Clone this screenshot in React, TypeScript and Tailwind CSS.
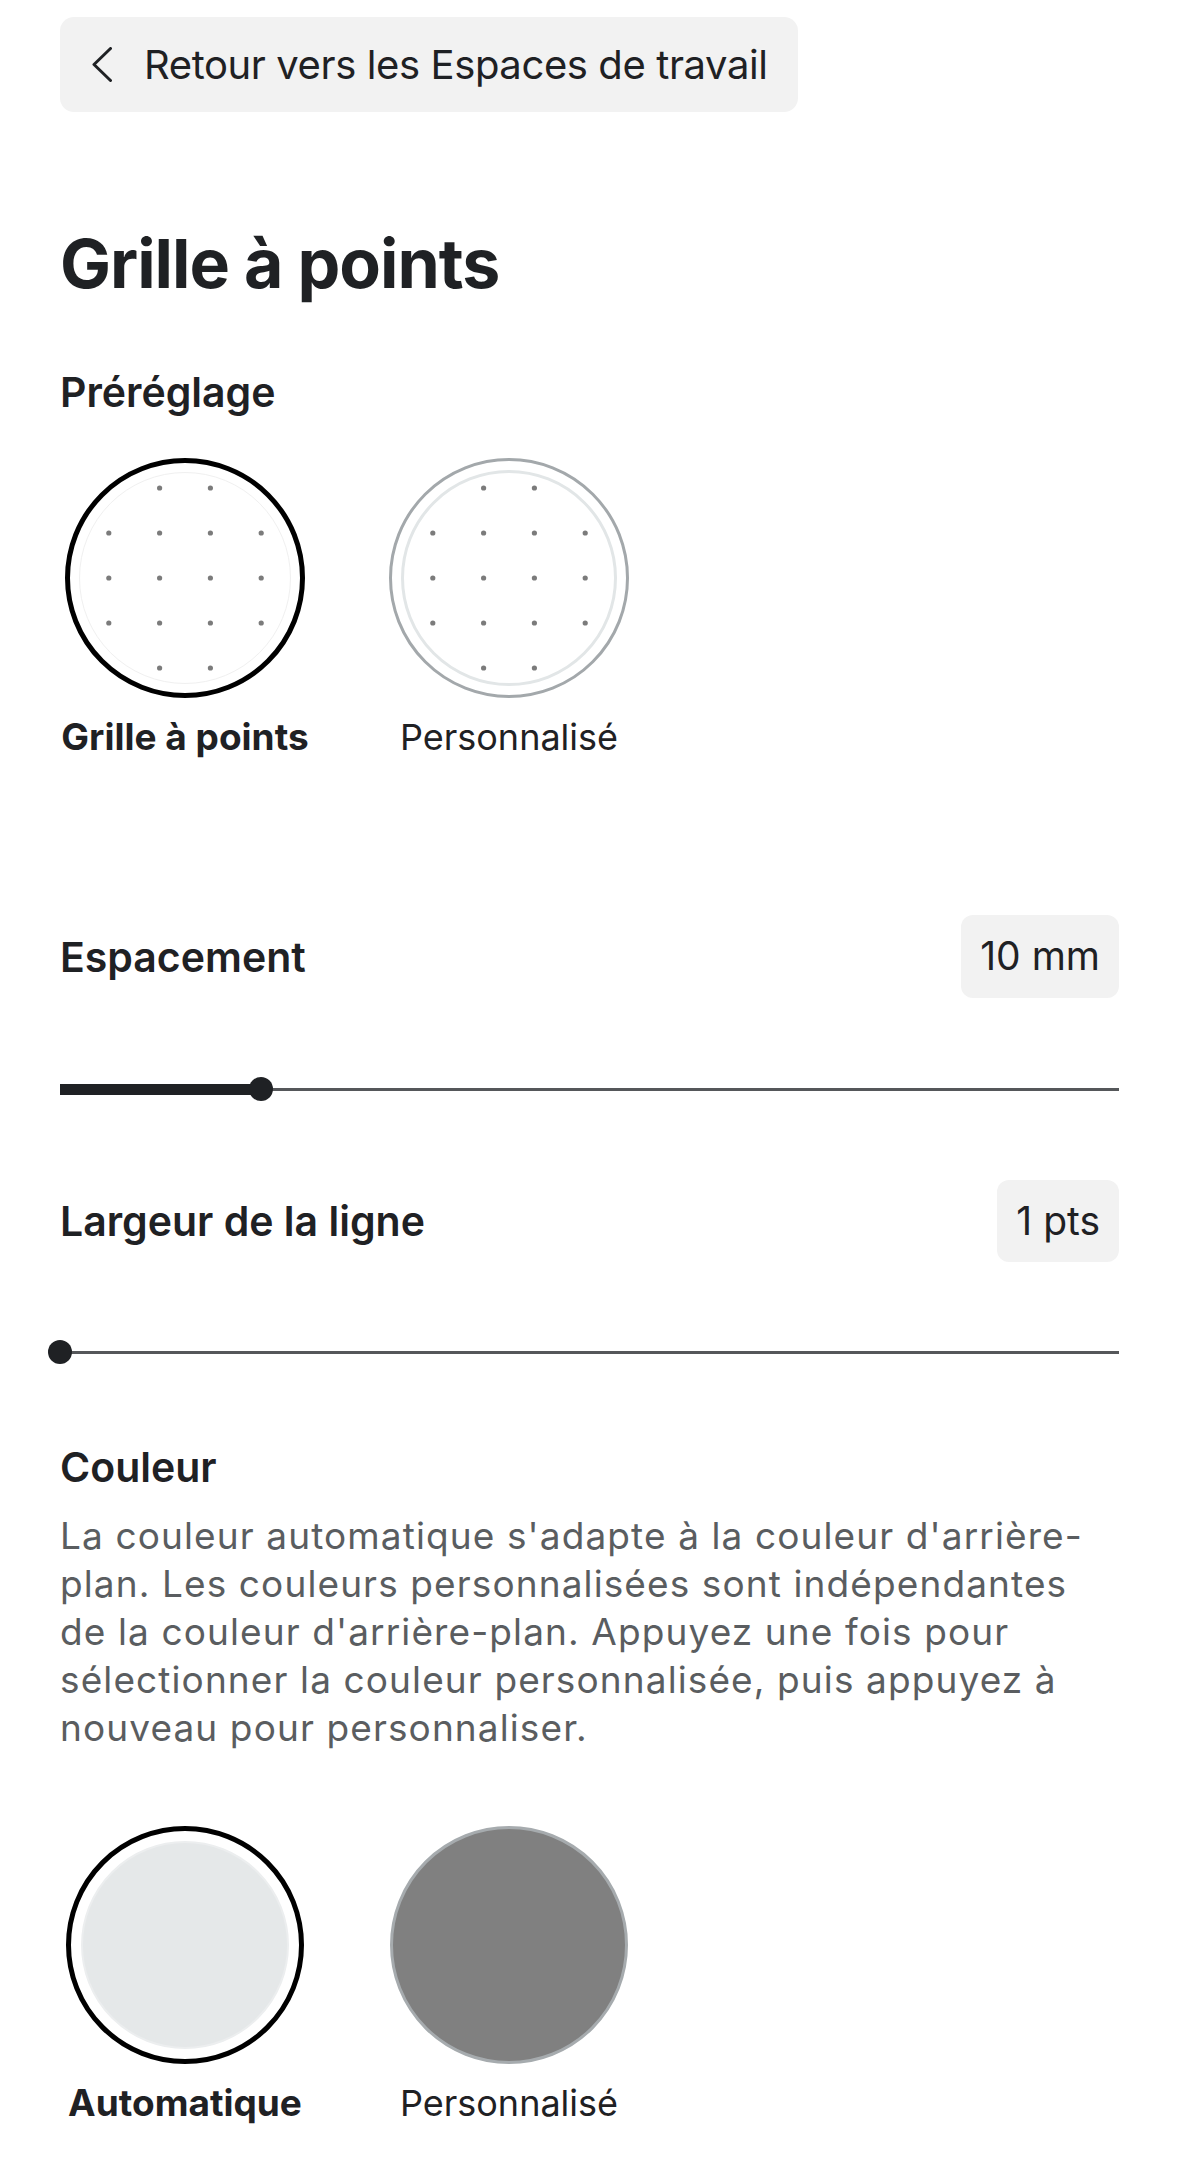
function Dots() {
  const cols = [105 - 76.2, 105 - 25.4, 105 + 25.4, 105 + 76.2];
  const rows = [15, 60, 105, 150, 195];
  const pts: [number, number][] = [];
  rows.forEach((y, i) => {
    cols.forEach((x, j) => {
      const edge = i === 0 || i === rows.length - 1;
      if (edge && (j === 0 || j === 3)) return;
      pts.push([x, y]);
    });
  });
  return (
    <svg width="210" height="210" viewBox="0 0 210 210" className="shrink-0">
      {pts.map(([x, y], k) => (
        <circle key={k} cx={x} cy={y} r="2.6" fill="#7b7b7b" />
      ))}
    </svg>
  );
}

function Slider({ value }: { value: number }) {
  // value = x offset of the thumb centre inside the track
  return (
    <div className="relative h-[24px] w-full flex items-center">
      <div className="h-[3px] w-full bg-[#55575a]" />
      <div className="absolute left-0 top-[6.5px] h-[11px] bg-[#1f2124]" style={{ width: value }} />
      <div
        className="absolute top-0 h-[24px] w-[24px] rounded-full bg-[#1f2124]"
        style={{ left: value - 12 }}
      />
    </div>
  );
}

export default function App() {
  return (
    <div className="min-h-screen bg-white px-[60px] pt-[17px] pb-[40px] text-[#1f2124] font-['Inter',sans-serif]">
      {/* back to workspaces */}
      <button
        type="button"
        className="flex h-[95px] items-center rounded-[14px] bg-[#f2f2f2] pl-[32px] pr-[30px] text-[40px] leading-none"
      >
        <svg width="20" height="35" viewBox="0 0 20 35" className="mr-[32px] shrink-0" fill="none">
          <polyline points="18.5,1.5 2,17.5 18.5,33.5" stroke="#1f2124" strokeWidth="3" strokeLinecap="round" strokeLinejoin="round" />
        </svg>
        <span className="tracking-[-0.01em]">Retour vers les Espaces de travail</span>
      </button>

      <h1 className="mt-[111px] text-[68px] font-bold leading-[80px] tracking-[-0.015em]">Grille à points</h1>

      <h2 className="mt-[67px] text-[41px] font-semibold leading-[44px]">Préréglage</h2>
      <div className="mt-[44px] flex gap-[74px]">
        <div className="flex w-[250px] flex-col items-center">
          <div className="flex h-[240px] w-[240px] items-center justify-center rounded-full border-[5px] border-black">
            <div className="flex h-[212px] w-[212px] items-center justify-center rounded-full border-[1.5px] border-[#f0f0f0]">
              <Dots />
            </div>
          </div>
          <span className="mt-[19px] whitespace-nowrap text-[37px] font-bold leading-[40px]">Grille à points</span>
        </div>
        <div className="flex w-[250px] flex-col items-center">
          <div className="flex h-[240px] w-[240px] items-center justify-center rounded-full border-[3px] border-[#a3a8ab]">
            <div className="flex h-[216px] w-[216px] items-center justify-center rounded-full border-[3px] border-[#e2e6e7]">
              <Dots />
            </div>
          </div>
          <span className="mt-[19px] text-[36px] leading-[40px]">Personnalisé</span>
        </div>
      </div>

      <div className="mt-[158px] flex h-[83px] items-center justify-between">
        <h2 className="text-[41px] font-semibold leading-[44px]">Espacement</h2>
        <span className="flex h-[83px] items-center rounded-[12px] bg-[#f2f2f2] px-[19px] text-[39px]">10 mm</span>
      </div>
      <div className="mt-[79px]">
        <Slider value={201} />
      </div>

      <div className="mt-[79px] flex h-[82px] items-center justify-between">
        <h2 className="text-[41px] font-semibold leading-[44px]">Largeur de la ligne</h2>
        <span className="flex h-[82px] items-center rounded-[12px] bg-[#f2f2f2] px-[19px] text-[39px]">1 pts</span>
      </div>
      <div className="mt-[78px]">
        <Slider value={0} />
      </div>

      <h2 className="mt-[81px] text-[41px] font-semibold leading-[44px]">Couleur</h2>
      <p className="mt-[23px] whitespace-nowrap text-[37px] leading-[48px] tracking-[0.03em] text-[#5a5d60]">
        La couleur automatique s'adapte à la couleur d'arrière-
        <br />
        plan. Les couleurs personnalisées sont indépendantes
        <br />
        de la couleur d'arrière-plan. Appuyez une fois pour
        <br />
        sélectionner la couleur personnalisée, puis appuyez à
        <br />
        nouveau pour personnaliser.
      </p>

      <div className="mt-[74px] flex gap-[74px]">
        <div className="flex w-[250px] flex-col items-center">
          <div className="flex h-[238px] w-[238px] items-center justify-center rounded-full border-[5px] border-black">
            <div className="h-[208px] w-[208px] rounded-full border-[2px] border-[#eceeef] bg-[#e5e8e9]" />
          </div>
          <span className="mt-[19px] text-[37px] font-bold leading-[40px]">Automatique</span>
        </div>
        <div className="flex w-[250px] flex-col items-center">
          <div className="h-[238px] w-[238px] rounded-full border-[3px] border-[#a6abae] bg-[#808080]" />
          <span className="mt-[19px] text-[36px] leading-[40px]">Personnalisé</span>
        </div>
      </div>
    </div>
  );
}
